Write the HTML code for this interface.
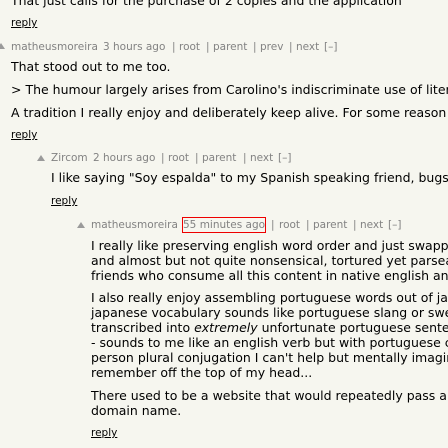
<!DOCTYPE html>
<html style="overflow:hidden"><head><style>
html,body{margin:0;padding:0;background:#f6f6ef}
#w{position:relative;width:448px;height:448px;overflow:hidden;background:#f6f6ef;font-family:"DejaVu Sans","Liberation Sans",sans-serif}
.l{position:absolute;white-space:nowrap;font-size:12.5px;color:#000;line-height:15px}
.m{position:absolute;height:14px;top:0;left:0;width:448px}
.m span{position:absolute;white-space:nowrap;font-size:10.5px;color:#828282;line-height:14px;top:0}
.r{position:absolute;font-size:10.5px;color:#000;text-decoration:underline;line-height:12px}
.t{position:absolute;width:0;height:0;border-left:4px solid transparent;border-right:4px solid transparent;border-bottom:6px solid #9a9a9a}
.box{outline:1px solid #e00}
</style></head><body><div id="w">
<div class="l" style="left:11px;top:-7px">That just calls for the purchase of 2 copies and the application</div>
<div class="r" style="left:11px;top:17px">reply</div>

<div class="t" style="left:-3px;top:43px"></div>
<div class="m" style="top:40px"><span style="left:11px">matheusmoreira</span><span style="left:103px">3 hours ago</span><span style="left:172px">|</span><span style="left:179px">root</span><span style="left:206px">|</span><span style="left:213px">parent</span><span style="left:253px">|</span><span style="left:260px">prev</span><span style="left:289px">|</span><span style="left:296px">next</span><span style="left:324px">[–]</span></div>
<div class="l" style="left:11px;top:59px">That stood out to me too.</div>
<div class="l" style="left:11px;top:82px">&gt; The humour largely arises from Carolino's indiscriminate use of literal</div>
<div class="l" style="left:11px;top:105px">A tradition I really enjoy and deliberately keep alive. For some reason po</div>
<div class="r" style="left:11px;top:129px">reply</div>

<div class="t" style="left:37px;top:155px"></div>
<div class="m" style="top:151px"><span style="left:51px">Zircom</span><span style="left:93px">2 hours ago</span><span style="left:161px">|</span><span style="left:168px">root</span><span style="left:195px">|</span><span style="left:202px">parent</span><span style="left:243px">|</span><span style="left:250px">next</span><span style="left:278px">[–]</span></div>
<div class="l" style="left:51px;top:170px">I like saying "Soy espalda" to my Spanish speaking friend, bugs th</div>
<div class="r" style="left:51px;top:195px">reply</div>

<div class="t" style="left:77px;top:222px"></div>
<div class="m" style="top:218px"><span style="left:91px">matheusmoreira</span><span class="box" style="left:183px;width:82px">55 minutes ago</span><span style="left:271px">|</span><span style="left:279px">root</span><span style="left:306px">|</span><span style="left:313px">parent</span><span style="left:353px">|</span><span style="left:360px">next</span><span style="left:388px">[–]</span></div>
<div class="l" style="left:91px;top:238px">I really like preserving english word order and just swappin</div>
<div class="l" style="left:91px;top:253px">and almost but not quite nonsensical, tortured yet parseab</div>
<div class="l" style="left:91px;top:268px">friends who consume all this content in native english and</div>
<div class="l" style="left:91px;top:290px">I also really enjoy assembling portuguese words out of jap</div>
<div class="l" style="left:91px;top:305px">japanese vocabulary sounds like portuguese slang or swea</div>
<div class="l" style="left:91px;top:320px">transcribed into <i>extremely</i> unfortunate portuguese sentenc</div>
<div class="l" style="left:91px;top:335px">- sounds to me like an english verb but with portuguese co</div>
<div class="l" style="left:91px;top:350px">person plural conjugation I can't help but mentally imagine</div>
<div class="l" style="left:91px;top:365px">remember off the top of my head...</div>
<div class="l" style="left:91px;top:388px">There used to be a website that would repeatedly pass a b</div>
<div class="l" style="left:91px;top:403px">domain name.</div>
<div class="r" style="left:91px;top:427px">reply</div>
</div></body></html>
